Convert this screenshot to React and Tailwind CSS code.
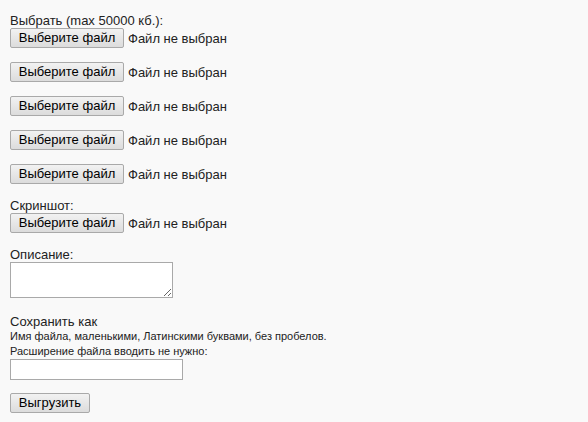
import React from 'react';

// Кнопка в стиле стандартного системного контрола
const Knopka = ({ children, className = '' }) => (
  <button
    type="button"
    className={`h-[20px] rounded-[2px] border border-[#a9a9a9] bg-gradient-to-b from-[#f2f2f2] to-[#dcdcdc] text-[13px] leading-[18px] text-black ${className}`}
  >
    {children}
  </button>
);

// Поле выбора файла: кнопка + подпись справа
const FailPole = () => (
  <div className="flex h-[20px] items-center">
    <Knopka className="w-[114px]">Выберите файл</Knopka>
    <span className="ml-[4px] text-[13px] leading-[15px] text-[#222]">Файл не выбран</span>
  </div>
);

const App = () => {
  return (
    <div className="min-h-[422px] bg-[#f9f9f9] pl-[10px] pt-[13px] font-['Liberation_Sans',Arial,sans-serif] text-[13px] leading-[15px] text-[#222]">
      <form onSubmit={(e) => e.preventDefault()}>
        <div>Выбрать (max 50000 кб.):</div>
        <FailPole />
        {[1, 2, 3, 4].map((n) => (
          <div key={n} className="mt-[14px]">
            <FailPole />
          </div>
        ))}

        <div className="mt-[14px]">Скриншот:</div>
        <FailPole />

        <div className="mt-[14px]">Описание:</div>
        <textarea className="block h-[36px] w-[163px] resize border border-[#a9a9a9] bg-white" />

        <div className="mt-[16px]">Сохранить как</div>
        <div className="text-[11px] leading-[15px]">
          <div>Имя файла, маленькими, Латинскими буквами, без пробелов.</div>
          <div>Расширение файла вводить не нужно:</div>
        </div>
        <input type="text" className="block h-[21px] w-[173px] border border-[#a9a9a9] bg-white" />

        <Knopka className="mt-[13px] block w-[80px]">Выгрузить</Knopka>
      </form>
    </div>
  );
};

export default App;
